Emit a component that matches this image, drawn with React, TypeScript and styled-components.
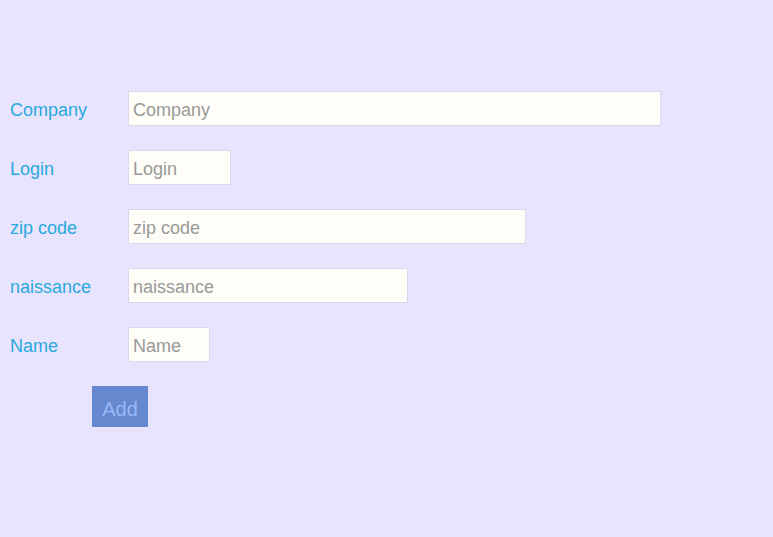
import React from 'react';
import styled, { createGlobalStyle } from 'styled-components';

const fields = [
  { name: 'Company', width: 533 },
  { name: 'Login', width: 103 },
  { name: 'zip code', width: 398 },
  { name: 'naissance', width: 280 },
  { name: 'Name', width: 82 },
];

const GlobalStyle = createGlobalStyle`
  html, body {
    margin: 0;
    padding: 0;
    background: #e8e4fe;
  }
  body {
    font-family: 'Liberation Sans', Arial, sans-serif;
  }
`;

const App = () => {
  return (
    <>
      <GlobalStyle />
      <Page>
        <Form onSubmit={(e) => e.preventDefault()}>
          {fields.map((f) => (
            <Row key={f.name}>
              <Label htmlFor={`field-${f.name}`}>{f.name}</Label>
              <Input id={`field-${f.name}`} type="text" placeholder={f.name} $width={f.width} />
            </Row>
          ))}
          <ButtonRow>
            <AddButton type="submit">Add</AddButton>
          </ButtonRow>
        </Form>
      </Page>
    </>
  );
};

export default App;

const Page = styled.div`
  width: 773px;
  height: 537px;
  box-sizing: border-box;
  padding: 91px 0 0 10px;
  background: #e8e4fe;
`;

const Form = styled.form`
  display: flex;
  flex-direction: column;
  gap: 24px;
`;

const Row = styled.div`
  display: flex;
  align-items: center;
  height: 35px;
`;

const Label = styled.label`
  width: 118px;
  padding-top: 4px;
  font-size: 18px;
  color: #2aa9de;
`;

const Input = styled.input<{ $width: number }>`
  width: ${({ $width }) => $width}px;
  height: 35px;
  box-sizing: border-box;
  margin: 0;
  padding: 3px 4px 0;
  border: 1px solid #dcd8ec;
  background: #fffdf8;
  font-family: 'Liberation Sans', Arial, sans-serif;
  font-size: 18px;
  color: #555;
  outline: none;

  &::placeholder {
    color: #999999;
  }
`;

const ButtonRow = styled.div`
  display: flex;
  padding-left: 82px;
`;

const AddButton = styled.button`
  width: 56px;
  height: 41px;
  margin: 0;
  padding: 5px 0 0;
  border: none;
  background: #6688cf;
  color: #9ab8f6;
  font-family: 'Liberation Sans', Arial, sans-serif;
  font-size: 20px;
  cursor: pointer;
`;
